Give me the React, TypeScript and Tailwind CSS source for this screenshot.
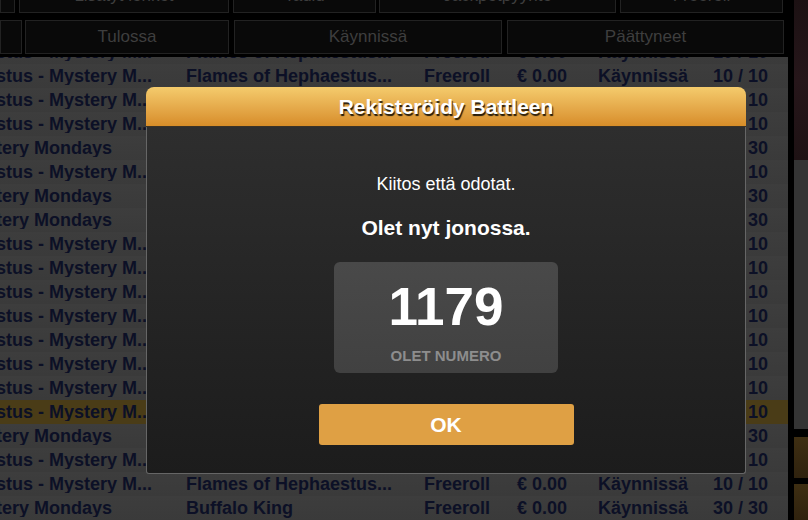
const H = { name: 'stus - Mystery M...', game: 'Flames of Hephaestus...', seats: '10 / 10' }
const M = { name: 'tery Mondays', game: 'Buffalo King', seats: '30 / 30' }

// first entry sits half under the tab bar
const rows = [H, H, H, H, M, H, M, M, H, H, H, H, H, H, H, H, M, H, H, M, H]
const HIGHLIGHT = 15

function Tab({ w, ml, label }: { w: string; ml?: string; label?: string }) {
  return (
    <div
      className={`${w} ${ml ?? ''} h-full shrink-0 flex items-center justify-center border border-[#222222] bg-[#090909] text-[17px] text-[#3e3e3e] whitespace-nowrap overflow-hidden`}
    >
      {label}
    </div>
  )
}

export default function App() {
  return (
    <div className="relative w-[808px] h-[520px] overflow-hidden bg-black font-['Liberation_Sans',Arial,sans-serif]">
      <div className="flex h-full">
        {/* Main lobby column */}
        <div className="w-[788px] flex flex-col shrink-0">
          {/* Top tabs (mostly scrolled out) */}
          <div className="flex h-[34px] -mt-[21px] shrink-0">
            <Tab w="w-[15px]" />
            <Tab w="w-[210px]" ml="ml-[4px]" label="Lisätyt lohkot" />
            <Tab w="w-[143px]" ml="ml-[4px]" label="Taulu" />
            <Tab w="w-[237px]" ml="ml-[3px]" label="Jackpotpyyntö" />
            <Tab w="w-[163px]" ml="ml-[4px]" label="Freeroll" />
          </div>

          {/* Status tabs */}
          <div className="flex h-[34px] mt-[7px] shrink-0">
            <Tab w="w-[22px]" />
            <Tab w="w-[204px]" ml="ml-[3px]" label="Tulossa" />
            <Tab w="w-[268px]" ml="ml-[5px]" label="Käynnissä" />
            <Tab w="w-[277px]" ml="ml-[5px]" label="Päättyneet" />
          </div>

          {/* Tournament table */}
          <div className="mt-[3px] flex-1 overflow-hidden bg-[#3a3a3a]">
            <div className="-mt-[17px]">
              {rows.map((r, i) => (
                <div
                  key={i}
                  className={`h-[24px] flex items-center text-[18px] leading-none font-bold text-[#0c1026] whitespace-nowrap ${
                    i === HIGHLIGHT ? 'bg-[#4a3c17]' : 'bg-linear-to-b from-[#3d3d3d] to-[#3a3a3a]'
                  }`}
                >
                  <div className="w-[186px] shrink-0 overflow-hidden">
                    <span className="-ml-[4px]">{r.name}</span>
                  </div>
                  <div className="w-[238px] shrink-0">{r.game}</div>
                  <div className="w-[93px] shrink-0">Freeroll</div>
                  <div className="w-[81px] shrink-0">€ 0.00</div>
                  <div className="flex-1">Käynnissä</div>
                  <div className="w-[70px] text-right mr-[20px]">{r.seats}</div>
                </div>
              ))}
            </div>
          </div>
        </div>

        {/* Right side panel edge */}
        <div className="w-[6px] bg-black shrink-0" />
        <div className="flex-1 flex flex-col">
          <div className="h-[160px] bg-linear-to-b from-[#1c1113] via-[#26161a] to-[#1e1214]" />
          <div className="h-[269px] bg-[#343434]" />
          <div className="h-[8px] bg-black" />
          <div className="h-[41px] bg-linear-to-b from-[#3e2e12] to-[#2f220e]" />
          <div className="h-[6px] bg-black" />
          <div className="flex-1 bg-linear-to-b from-[#3e2e12] to-[#2f220e]" />
        </div>
      </div>

      {/* Register dialog */}
      <div className="absolute left-[146px] top-[87px] w-[600px]">
        <div className="h-[40px] rounded-t-[8px] bg-linear-to-b from-[#f4cb6c] to-[#d78d28] border-b border-[#3b3226] flex items-center justify-center">
          <h2 className="text-white text-[21px] font-bold [text-shadow:1px_2px_1px_rgba(0,0,0,0.85)]">
            Rekisteröidy Battleen
          </h2>
        </div>
        <div className="h-[347px] rounded-b-[3px] border-x border-b border-[#666666] bg-linear-to-b from-[#2e2e2e] to-[#1c1c1c] flex flex-col items-center pt-[47px]">
          <p className="text-[18px] leading-[21px] text-white">Kiitos että odotat.</p>
          <p className="mt-[21px] text-[21px] leading-[24px] font-bold text-white">Olet nyt jonossa.</p>
          <div className="mt-[22px] w-[224px] h-[111px] rounded-[6px] bg-linear-to-b from-[#494949] to-[#414141] flex flex-col items-center pt-[18px]">
            <div className="text-[53px] leading-[53px] font-bold text-white">1179</div>
            <div className="mt-[14px] text-[15px] leading-[18px] font-bold text-[#8d8d8d]">OLET NUMERO</div>
          </div>
          <button className="mt-[31px] w-[255px] h-[41px] rounded-[3px] bg-[#dfa044] text-white text-[21px] font-bold">
            OK
          </button>
        </div>
      </div>
    </div>
  )
}
